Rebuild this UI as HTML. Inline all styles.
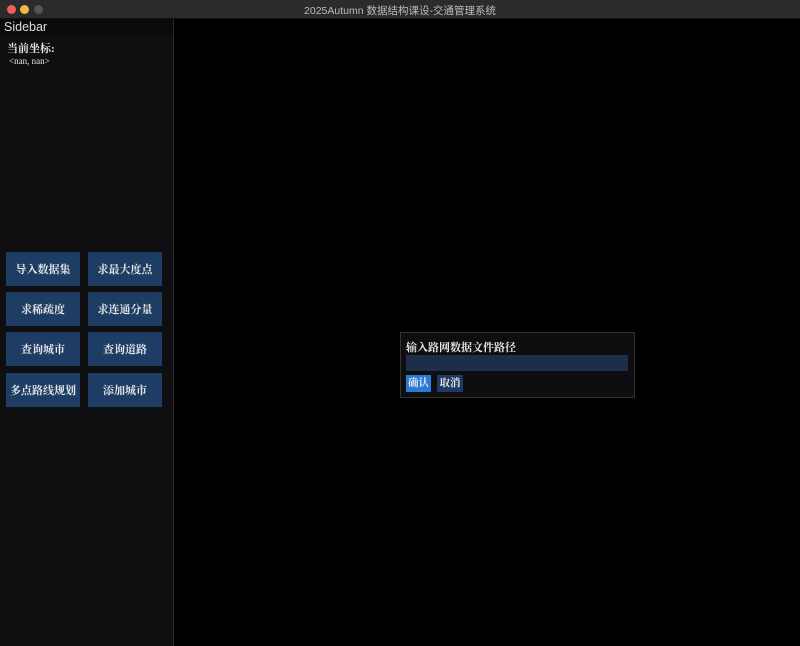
<!DOCTYPE html><html><head><style>
body{margin:0;width:800px;height:646px;background:#000;position:relative;overflow:hidden;font-family:"Liberation Serif","Noto Serif CJK SC",serif;color:#e8e8e8}
.a{position:absolute}
.btn{position:absolute;width:74px;height:34px;background:#1e3d64;color:#e6e6e6;font-size:11px;font-weight:bold;display:flex;align-items:center;justify-content:center}
</style></head><body>
<div class="a" style="left:0;top:0;width:800px;height:18px;background:#2b2b2d;border-bottom:1px solid #111"></div>
<div class="a" style="left:7px;top:5px;width:9px;height:9px;border-radius:50%;background:#ed5f57"></div>
<div class="a" style="left:20px;top:5px;width:9px;height:9px;border-radius:50%;background:#f3b745"></div>
<div class="a" style="left:34px;top:5px;width:9px;height:9px;border-radius:50%;background:#555"></div>
<div class="a" style="left:0;top:3px;width:800px;text-align:center;font:10.5px 'Liberation Sans','Noto Sans CJK SC',sans-serif;color:#bbb">2025Autumn 数据结构课设-交通管理系统</div>
<div class="a" style="left:0;top:19px;width:173px;height:627px;background:#0f0f11;border-right:1px solid #2a2a2c"></div>
<div class="a" style="left:0;top:19px;width:173px;height:16px;background:#0b0b0c"></div>
<div class="a" style="left:4px;top:20px;font:12.5px 'Liberation Sans',sans-serif;color:#ddd">Sidebar</div>
<div class="a" style="left:7px;top:40px;font-size:11px;font-weight:bold">当前坐标:</div>
<div class="a" style="left:9px;top:56px;font-size:9px">&lt;nan, nan&gt;</div>
<div class="btn" style="left:6px;top:252px">导入数据集</div>
<div class="btn" style="left:88px;top:252px">求最大度点</div>
<div class="btn" style="left:6px;top:292px">求稀疏度</div>
<div class="btn" style="left:88px;top:292px">求连通分量</div>
<div class="btn" style="left:6px;top:332px">查询城市</div>
<div class="btn" style="left:88px;top:332px">查询道路</div>
<div class="btn" style="left:6px;top:373px">多点路线规划</div>
<div class="btn" style="left:88px;top:373px">添加城市</div>
<div class="a" style="left:400px;top:332px;width:233px;height:64px;background:#0e0e11;border:1px solid #333"></div>
<div class="a" style="left:406px;top:339px;font-size:11px;font-weight:bold">输入路网数据文件路径</div>
<div class="a" style="left:406px;top:355px;width:222px;height:16px;background:#1c2e4a"></div>
<div class="a" style="left:406px;top:375px;width:25px;height:17px;background:#2a7ad6;font-size:10.5px;font-weight:bold;text-align:center;line-height:17px">确认</div>
<div class="a" style="left:437px;top:375px;width:26px;height:17px;background:#1d3b62;font-size:10.5px;font-weight:bold;text-align:center;line-height:17px">取消</div>
</body></html>
